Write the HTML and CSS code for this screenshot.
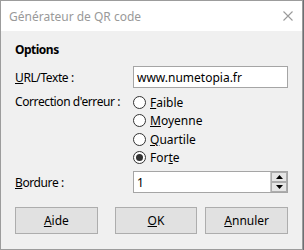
FILE: index.html
```html
<!DOCTYPE html>
<html lang="fr">
<head>
  <meta charset="UTF-8">
  <title>Générateur de QR code</title>
  <link rel="stylesheet" href="styles.css">
</head>
<body>
  <div class="window">
    <div class="titlebar">
      <span class="title">Générateur de QR code</span>
      <svg class="close" width="10" height="10" viewBox="0 0 10 10">
        <path d="M0.5 0.5 L9.5 9.5 M9.5 0.5 L0.5 9.5" stroke="#9a9a9a" stroke-width="1.1" fill="none"/>
      </svg>
    </div>
    <div class="content">
      <div class="heading">Options</div>
      <div class="form">
        <label class="label"><u>U</u>RL/Texte :</label>
        <div class="textbox">www.numetopia.fr</div>

        <label class="label label-top">Correction d'erreur :</label>
        <div class="radios">
          <div class="radio"><span class="dot"></span><span><u>F</u>aible</span></div>
          <div class="radio"><span class="dot"></span><span><u>M</u>oyenne</span></div>
          <div class="radio"><span class="dot"></span><span><u>Q</u>uartile</span></div>
          <div class="radio"><span class="dot checked"></span><span>For<u>t</u>e</span></div>
        </div>

        <label class="label spin-label"><u>B</u>ordure :</label>
        <div class="textbox spinbox">
          <span>1</span>
          <div class="spin">
            <div class="spin-btn">
              <svg width="7" height="4" viewBox="0 0 7 4"><path d="M3.5 0 L7 4 L0 4 Z" fill="#000"/></svg>
            </div>
            <div class="spin-btn">
              <svg width="7" height="4" viewBox="0 0 7 4"><path d="M0 0 L7 0 L3.5 4 Z" fill="#000"/></svg>
            </div>
          </div>
        </div>
      </div>
      <div class="buttons">
        <div class="btn"><u>A</u>ide</div>
        <div class="btn btn-ok"><u>O</u>K</div>
        <div class="btn"><u>A</u>nnuler</div>
      </div>
    </div>
  </div>
</body>
</html>
```
FILE: styles.css
```css
* {
  box-sizing: border-box;
  margin: 0;
  padding: 0;
}
body {
  font-family: 'Noto Sans', 'Liberation Sans', sans-serif;
  font-size: 12px;
  color: #000;
  background: #6b6f73;
  width: 304px;
  height: 250px;
  overflow: hidden;
}
.window {
  width: 303px;
  height: 250px;
  background: #f0f0f0;
  border: 1px solid #9c9c9c;
}
.titlebar {
  height: 30px;
  background: #fff;
  display: flex;
  align-items: center;
  justify-content: space-between;
  padding: 0 9px 0 8px;
}
.title {
  color: #999;
  font-size: 12px;
}
.content {
  padding: 11px 14px 0 14px;
}
.heading {
  font-weight: bold;
  line-height: 16px;
  letter-spacing: -0.5px;
}
.form {
  display: grid;
  grid-template-columns: 118px 155px;
  margin-top: 8px;
}
.label {
  display: flex;
  align-items: center;
  letter-spacing: -0.4px;
}
.label-top {
  align-items: flex-start;
  margin-top: 5px;
  line-height: 18.5px;
}
.textbox {
  height: 22px;
  background: #fff;
  border: 1px solid #a5a5a5;
  padding-left: 3px;
  display: flex;
  align-items: center;
}
.radios {
  margin-top: 5px;
}
.radio {
  height: 18.5px;
  display: flex;
  align-items: center;
  gap: 4px;
}
.dot {
  width: 13px;
  height: 13px;
  border: 1px solid #333;
  border-radius: 50%;
  background: #fff;
  display: flex;
  align-items: center;
  justify-content: center;
}
.dot.checked::after {
  content: "";
  width: 7px;
  height: 7px;
  border-radius: 50%;
  background: #333;
}
.spin-label,
.spinbox {
  margin-top: 4px;
}
.spinbox {
  justify-content: space-between;
  padding-right: 0;
}
.spin {
  width: 17px;
  height: 20px;
  display: flex;
  flex-direction: column;
  border-left: 1px solid #c8c8c8;
}
.spin-btn {
  flex: 1;
  background: #e5e5e5;
  border: 1px solid #acacac;
  display: flex;
  align-items: center;
  justify-content: center;
}
.buttons {
  display: flex;
  margin-top: 14px;
}
.btn {
  width: 83px;
  height: 27px;
  background: #e1e1e1;
  border: 1px solid #adadad;
  display: flex;
  align-items: center;
  justify-content: center;
}
.btn-ok {
  margin-left: 17px;
  margin-right: 8px;
}
```
